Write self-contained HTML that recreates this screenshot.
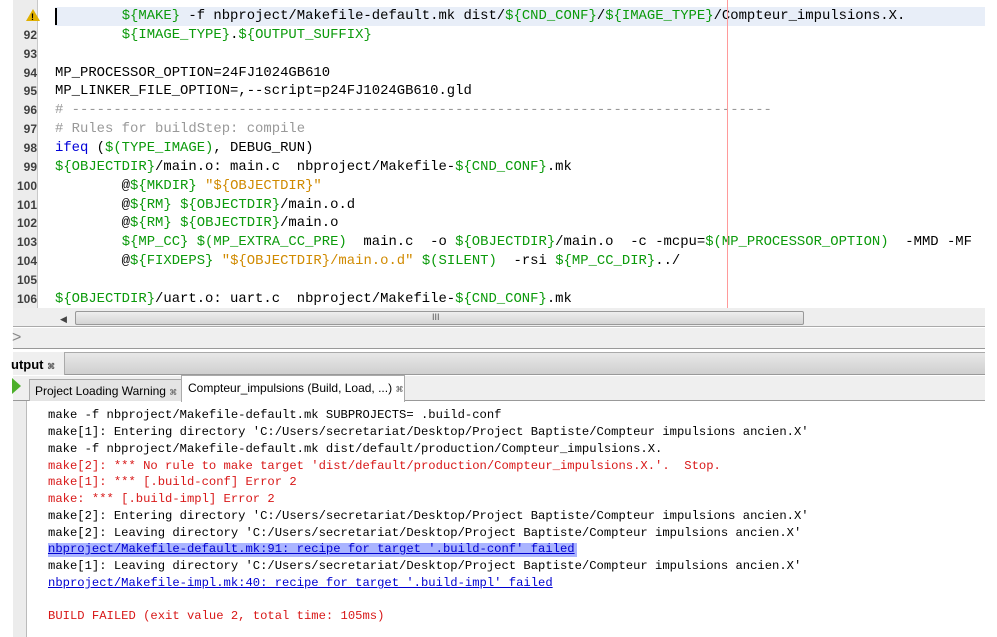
<!DOCTYPE html>
<html><head><meta charset="utf-8"><style>
*{margin:0;padding:0;box-sizing:border-box}
body{width:997px;height:637px;overflow:hidden;background:#fff;position:relative;font-family:"Liberation Sans",sans-serif}
.abs{position:absolute}
.code{font-family:"Liberation Mono",monospace;font-size:13.9px;white-space:pre;color:#000}
.ln{position:absolute;left:13px;width:24px;text-align:right;font-family:"Liberation Sans",sans-serif;font-size:12px;color:#222;font-weight:bold;opacity:.85}
.g{color:#0b9a0b}.o{color:#d08a00}.b{color:#0000d8}.c{color:#999}
.out{font-family:"Liberation Mono",monospace;font-size:12.2px;white-space:pre;color:#000;position:absolute;left:48px}
.r{color:#d81818}
.lk{color:#0000d0;text-decoration:underline}
</style></head><body>
<!-- editor -->
<div class="abs" style="left:13px;top:0;width:25px;height:308px;background:#ececec;border-right:1px solid #c8c8c8"></div>
<div class="abs" style="left:38px;top:0;width:947px;height:308px;background:#fff"></div>
<div class="abs" style="left:55px;top:7px;width:930px;height:19px;background:#e8eef8"></div>
<div class="abs" style="left:55px;top:8px;width:2px;height:17px;background:#000"></div>
<div class="abs" style="left:26px;top:9px;width:0;height:0;border-left:7px solid transparent;border-right:7px solid transparent;border-bottom:12px solid #e0b000"></div>
<div class="abs" style="left:31px;top:12px;font-size:9px;font-weight:bold;color:#000">!</div>
<div id="ed"></div>
<div class="abs" style="left:727px;top:0;width:1px;height:308px;background:#ff9a9a"></div>
<script>
var rows=[
[null,'<span class="b">endif</span>'],
[null,'        <span class="g">${MAKE}</span> -f nbproject/Makefile-default.mk dist/<span class="g">${CND_CONF}</span>/<span class="g">${IMAGE_TYPE}</span>/Compteur_impulsions.X.'],
[92,'        <span class="g">${IMAGE_TYPE}</span>.<span class="g">${OUTPUT_SUFFIX}</span>'],
[93,''],
[94,'MP_PROCESSOR_OPTION=24FJ1024GB610'],
[95,'MP_LINKER_FILE_OPTION=,--script=p24FJ1024GB610.gld'],
[96,'<span class="c"># ------------------------------------------------------------------------------------</span>'],
[97,'<span class="c"># Rules for buildStep: compile</span>'],
[98,'<span class="b">ifeq</span> (<span class="g">$(TYPE_IMAGE)</span>, DEBUG_RUN)'],
[99,'<span class="g">${OBJECTDIR}</span>/main.o: main.c  nbproject/Makefile-<span class="g">${CND_CONF}</span>.mk'],
[100,'        @<span class="g">${MKDIR}</span> <span class="o">"${OBJECTDIR}"</span>'],
[101,'        @<span class="g">${RM}</span> <span class="g">${OBJECTDIR}</span>/main.o.d'],
[102,'        @<span class="g">${RM}</span> <span class="g">${OBJECTDIR}</span>/main.o'],
[103,'        <span class="g">${MP_CC}</span> <span class="g">$(MP_EXTRA_CC_PRE)</span>  main.c  -o <span class="g">${OBJECTDIR}</span>/main.o  -c -mcpu=<span class="g">$(MP_PROCESSOR_OPTION)</span>  -MMD -MF'],
[104,'        @<span class="g">${FIXDEPS}</span> <span class="o">"${OBJECTDIR}/main.o.d"</span> <span class="g">$(SILENT)</span>  -rsi <span class="g">${MP_CC_DIR}</span>../'],
[105,''],
[106,'<span class="g">${OBJECTDIR}</span>/uart.o: uart.c  nbproject/Makefile-<span class="g">${CND_CONF}</span>.mk']
];
var h='';
for(var i=0;i<rows.length;i++){var t=-11.9+18.86*i;
if(rows[i][0]!==null)h+='<div class="ln" style="top:'+(t+2)+'px">'+rows[i][0]+'</div>';
h+='<div class="abs code" style="left:55px;top:'+(t+1)+'px;height:19px;width:930px;overflow:hidden">'+rows[i][1]+'</div>';}
document.getElementById('ed').innerHTML=h;
</script>
<div class="abs" style="left:13px;top:308px;width:972px;height:19px;background:#eee;border-bottom:1px solid #aaa"></div>
<div class="abs" style="left:60px;top:314px;font-size:9px;color:#444">◀</div>
<div class="abs" style="left:75px;top:311px;width:729px;height:14px;border:1px solid #999;border-radius:2px;background:linear-gradient(#eee,#d4d4d4)"></div>
<div class="abs" style="left:432px;top:312px;font-size:9px;color:#555">III</div>
<!-- toolbar -->
<div class="abs" style="left:13px;top:328px;width:972px;height:21px;background:#efefef;border-bottom:1px solid #999"></div>
<div class="abs" style="left:12px;top:329px;font-size:16px;color:#888">&gt;</div>
<!-- output title -->
<div class="abs" style="left:13px;top:352px;width:972px;height:23px;background:linear-gradient(#e8e8e8,#cfcfcf);border-top:1px solid #aaa;border-bottom:1px solid #999"></div>
<div class="abs" style="left:13px;top:352px;width:52px;height:23px;background:#efefef;border-right:1px solid #aaa"></div>
<div class="abs" style="left:11px;top:357px;font-size:13px;font-weight:bold;color:#000">utput <span style="font-size:8px;color:#555">⌘</span></div>
<!-- tabs row -->
<div class="abs" style="left:13px;top:376px;width:972px;height:25px;background:#efefef;border-bottom:1px solid #999"></div>
<div class="abs" style="left:12px;top:378px;width:0;height:0;border-top:8px solid transparent;border-bottom:8px solid transparent;border-left:9px solid #4caf2a"></div>
<div class="abs" style="left:29px;top:379px;width:153px;height:22px;background:#e4e4e4;border:1px solid #aaa;border-bottom:none;font-size:12px;padding:4px 5px;white-space:nowrap">Project Loading Warning <span style="font-size:8px;color:#555">⌘</span></div>
<div class="abs" style="left:181px;top:375px;width:224px;height:27px;background:#fff;border:1px solid #aaa;border-bottom:none;font-size:12px;padding:5px 6px;white-space:nowrap">Compteur_impulsions (Build, Load, ...) <span style="font-size:8px;color:#555">⌘</span></div>
<!-- output content -->
<div class="abs" style="left:13px;top:401px;width:14px;height:236px;background:#ececec;border-right:1px solid #bbb"></div>
<div class="abs" style="left:48px;top:543px;width:529px;height:14px;background:#aab4ff"></div>
<div class="out" style="top:408px">make -f nbproject/Makefile-default.mk SUBPROJECTS= .build-conf</div>
<div class="out" style="top:425px">make[1]: Entering directory 'C:/Users/secretariat/Desktop/Project Baptiste/Compteur impulsions ancien.X'</div>
<div class="out" style="top:442px">make -f nbproject/Makefile-default.mk dist/default/production/Compteur_impulsions.X.</div>
<div class="out r" style="top:459px">make[2]: *** No rule to make target 'dist/default/production/Compteur_impulsions.X.'.  Stop.</div>
<div class="out r" style="top:475px">make[1]: *** [.build-conf] Error 2</div>
<div class="out r" style="top:492px">make: *** [.build-impl] Error 2</div>
<div class="out" style="top:509px">make[2]: Entering directory 'C:/Users/secretariat/Desktop/Project Baptiste/Compteur impulsions ancien.X'</div>
<div class="out" style="top:526px">make[2]: Leaving directory 'C:/Users/secretariat/Desktop/Project Baptiste/Compteur impulsions ancien.X'</div>
<div class="out lk" style="top:542px">nbproject/Makefile-default.mk:91: recipe for target '.build-conf' failed</div>
<div class="out" style="top:559px">make[1]: Leaving directory 'C:/Users/secretariat/Desktop/Project Baptiste/Compteur impulsions ancien.X'</div>
<div class="out lk" style="top:576px">nbproject/Makefile-impl.mk:40: recipe for target '.build-impl' failed</div>
<div class="out r" style="top:609px">BUILD FAILED (exit value 2, total time: 105ms)</div>
</body></html>
